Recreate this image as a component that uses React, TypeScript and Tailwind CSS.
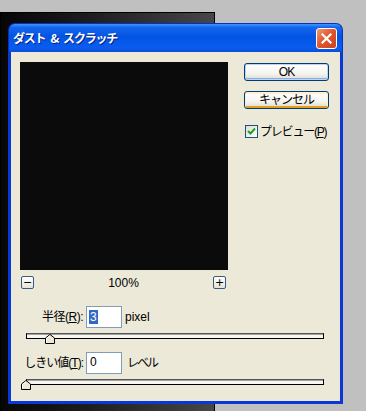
import React from "react";

const uiFont = "font-['Liberation_Sans','Noto_Sans_CJK_JP',sans-serif]";

function Thumb() {
  return (
    <svg width="10" height="10" viewBox="0 0 10 10" className="block">
      <path d="M0.5 9.5 V4 L5 0.5 L9.5 4 V9.5 Z" fill="#ece9d8" stroke="#000" strokeWidth="1" />
      <path d="M1.5 8.5 V4.4 L5 1.7" fill="none" stroke="#fff" strokeWidth="1" />
    </svg>
  );
}

function Slider({ thumbLeft }: { thumbLeft: number }) {
  return (
    <div className="relative ml-[15px] w-[298px] h-[10px]">
      <div className="h-[6px] border border-black border-t-[#555] bg-[#f7f6f1] shadow-[inset_0_1px_0_#a0a0a0]" />
      <div className="absolute top-[1px]" style={{ left: thumbLeft }}>
        <Thumb />
      </div>
    </div>
  );
}

function XpButton({ label, variant }: { label: string; variant: "default" | "hover" }) {
  const ring =
    variant === "default"
      ? "shadow-[inset_0_0_0_1px_#bcd4f6,inset_0_-1px_0_1px_#89ade4]"
      : "shadow-[inset_0_1px_0_1px_#fff0cf,inset_0_-2px_0_0_#e5a01a,inset_1px_0_0_#f8b330,inset_-1px_0_0_#f8b330]";
  return (
    <div
      className={`w-[85px] h-[18px] rounded-[3px] border border-[#003c74] bg-[linear-gradient(180deg,#ffffff_0%,#f5f4ef_60%,#dcd8cc_100%)] flex items-center justify-center text-[12px] leading-none text-black tracking-[-1px] ${ring}`}
    >
      {label}
    </div>
  );
}

function SmallSquare({ sign }: { sign: string }) {
  return (
    <div className="w-[13px] h-[13px] rounded-[2px] border border-[#3a5a80] bg-[linear-gradient(180deg,#ffffff,#e6e3d7)] flex items-center justify-center text-[11px] leading-none text-black font-['DejaVu_Sans',sans-serif]">
      {sign}
    </div>
  );
}

export default function App() {
  return (
    <div className={`relative w-[366px] h-[411px] bg-[#c0c0c0] overflow-hidden ${uiFont}`}>
      {/* 後ろの画像ウィンドウ */}
      <div className="absolute left-0 top-[12px] w-[215px] h-[410px] border border-black bg-[linear-gradient(90deg,#060606_0%,#1c1c1c_40%,#474747_100%)]" />

      {/* ダイアログ */}
      <div className="absolute left-[8px] top-[23px] w-[335px] h-[381px] flex flex-col">
        {/* タイトルバー */}
        <div className="h-[29px] rounded-t-[7px] border border-b-0 border-[#0a2fc0] bg-[linear-gradient(180deg,#3e95ff_0%,#1566ee_12%,#0254e3_45%,#0a5cf0_85%,#0b4fd8_100%)] flex items-center justify-between pl-[4px] pr-[5px]">
          <div className="flex items-center gap-[5px] text-[12px] font-bold text-white [text-shadow:1px_1px_0_#0a1e80] tracking-[-1.2px] font-['Noto_Sans_CJK_JP',sans-serif]">
            <span>ダスト</span>
            <span>&amp;</span>
            <span>スクラッチ</span>
          </div>
          <div className="w-[21px] h-[21px] rounded-[3px] border border-white bg-[linear-gradient(135deg,#f09a78_0%,#e2582f_45%,#c8431d_100%)] flex items-center justify-center">
            <svg width="11" height="11" viewBox="0 0 11 11">
              <path d="M1.5 1.5 L9.5 9.5 M9.5 1.5 L1.5 9.5" stroke="#fff" strokeWidth="2.2" strokeLinecap="square" />
            </svg>
          </div>
        </div>

        {/* 本体 */}
        <div className="flex-1 border-x-[3px] border-b-[3px] border-[#0838d6] bg-[#ece9d8] flex flex-col pt-[10px]">
          <div className="flex">
            <div className="flex flex-col ml-[9px]">
              <div className="w-[208px] h-[208px] bg-[#0b0b0b]" />
              <div className="flex items-center justify-between mt-[6px] ml-[1px] mr-[2px]">
                <SmallSquare sign="−" />
                <span className="text-[12px] leading-none text-black">100%</span>
                <SmallSquare sign="+" />
              </div>
            </div>

            <div className="flex flex-col ml-[16px] mt-[1px]">
              <XpButton label="OK" variant="default" />
              <div className="mt-[10px]">
                <XpButton label="キャンセル" variant="hover" />
              </div>
              <div className="flex items-center mt-[16px] ml-[1px]">
                <div className="w-[13px] h-[13px] border border-[#1c5180] bg-[linear-gradient(135deg,#dcdcd6,#ffffff)] flex items-center justify-center">
                  <svg width="9" height="9" viewBox="0 0 9 9">
                    <path d="M1 4 L3.5 6.5 L8 1.5" fill="none" stroke="#21a121" strokeWidth="2" />
                  </svg>
                </div>
                <span className="ml-[2px] text-[12px] leading-none text-black tracking-[-1.2px]">
                  プレビュー(<span className="underline">P</span>)
                </span>
              </div>
            </div>
          </div>

          {/* 半径 */}
          <div className="flex items-center mt-[17px]">
            <div className="w-[72px] text-right text-[12px] leading-none text-black whitespace-nowrap tracking-[-0.5px]">
              半径(<span className="underline">R</span>):
            </div>
            <div className="ml-[3px] w-[36px] h-[22px] border border-[#7f9db9] bg-white pl-[2px] pt-[3px] flex">
              <span className="bg-[#316ac5] text-white text-[12px] leading-[14px] h-[14px] px-[1px]">3</span>
            </div>
            <span className="ml-[3px] text-[12px] leading-none text-black">pixel</span>
          </div>
          <div className="mt-[5px]">
            <Slider thumbLeft={19} />
          </div>

          {/* しきい値 */}
          <div className="flex items-center mt-[9px]">
            <div className="w-[72px] text-right text-[12px] leading-none text-black whitespace-nowrap tracking-[-1px]">
              しきい値(<span className="underline">T</span>):
            </div>
            <div className="ml-[3px] w-[36px] h-[22px] border border-[#7f9db9] bg-white pl-[3px] pt-[3px] text-[12px] leading-none text-black">
              0
            </div>
            <span className="ml-[5px] text-[12px] leading-none text-black tracking-[-2px]">レベル</span>
          </div>
          <div className="mt-[5px]">
            <Slider thumbLeft={-5} />
          </div>
        </div>
      </div>
    </div>
  );
}
